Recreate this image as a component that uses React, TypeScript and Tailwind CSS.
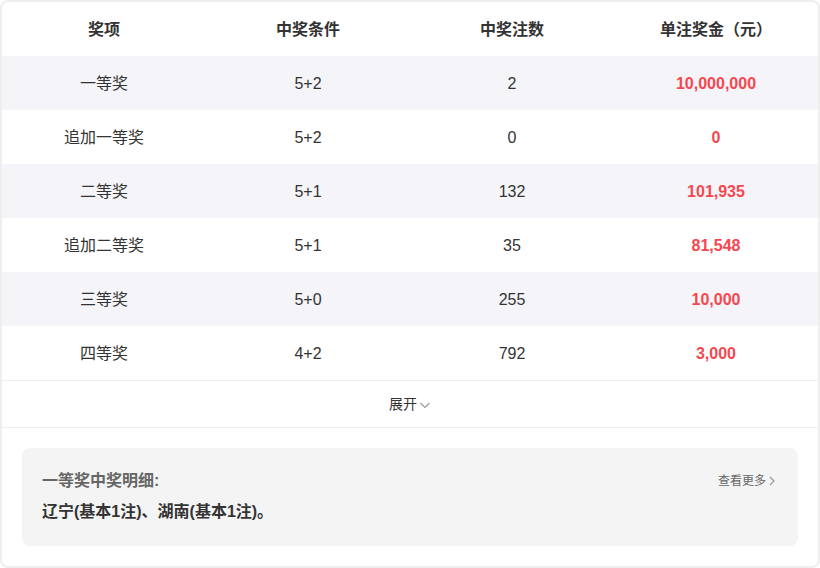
import React from 'react';

type Row = { name: string; cond: string; count: string; prize: string };

const rows: Row[] = [
  { name: '一等奖', cond: '5+2', count: '2', prize: '10,000,000' },
  { name: '追加一等奖', cond: '5+2', count: '0', prize: '0' },
  { name: '二等奖', cond: '5+1', count: '132', prize: '101,935' },
  { name: '追加二等奖', cond: '5+1', count: '35', prize: '81,548' },
  { name: '三等奖', cond: '5+0', count: '255', prize: '10,000' },
  { name: '四等奖', cond: '4+2', count: '792', prize: '3,000' },
];

const font = { fontFamily: '"Liberation Sans", "Noto Sans CJK SC", sans-serif' };

export default function App() {
  return (
    <div className="w-[820px] h-[568px] bg-white" style={font}>
      <div className="h-full border-2 border-[#eeeeee] rounded-lg overflow-hidden flex flex-col">
        {/* Header */}
        <div className="grid grid-cols-4 h-[54px] pt-0.5 items-center text-base font-bold text-[#333]">
          <div className="text-center">奖项</div>
          <div className="text-center">中奖条件</div>
          <div className="text-center">中奖注数</div>
          <div className="text-center">单注奖金（元）</div>
        </div>

        {/* Rows */}
        {rows.map((r, i) => (
          <div
            key={r.name}
            className={
              'grid grid-cols-4 h-[54px] pt-0.5 items-center text-base text-[#333] ' +
              (i % 2 === 0 ? 'bg-[#f5f5f9]' : 'bg-white')
            }
          >
            <div className="text-center">{r.name}</div>
            <div className="text-center">{r.cond}</div>
            <div className="text-center">{r.count}</div>
            <div className="text-center font-bold text-[#f5474f]">{r.prize}</div>
          </div>
        ))}

        {/* Expand */}
        <div className="h-[48px] border-y border-[#eeeeee] flex items-center justify-center text-sm text-[#333]">
          <span>展开</span>
          <svg width="12" height="12" viewBox="0 0 12 12" className="ml-0.5 mt-0.5">
            <path d="M1.5 4 L6 8.5 L10.5 4" fill="none" stroke="#999" strokeWidth="1.1" />
          </svg>
        </div>

        {/* Detail */}
        <div className="px-5 pt-5">
          <div className="bg-[#f4f4f4] rounded-lg h-[98px] px-5 pt-[23px]">
            <div className="flex justify-between items-start">
              <div className="text-base font-bold text-[#666] leading-[20px]">一等奖中奖明细:</div>
              <div className="flex items-center text-xs text-[#666] mr-[2px] mt-[2px]">
                <span>查看更多</span>
                <svg width="8" height="12" viewBox="0 0 8 12" className="ml-0.5">
                  <path d="M2 2 L6 6 L2 10" fill="none" stroke="#999" strokeWidth="1.2" />
                </svg>
              </div>
            </div>
            <div className="mt-[11px] text-base font-bold text-[#333] leading-[20px]">
              辽宁(基本1注)、湖南(基本1注)。
            </div>
          </div>
        </div>
      </div>
    </div>
  );
}
